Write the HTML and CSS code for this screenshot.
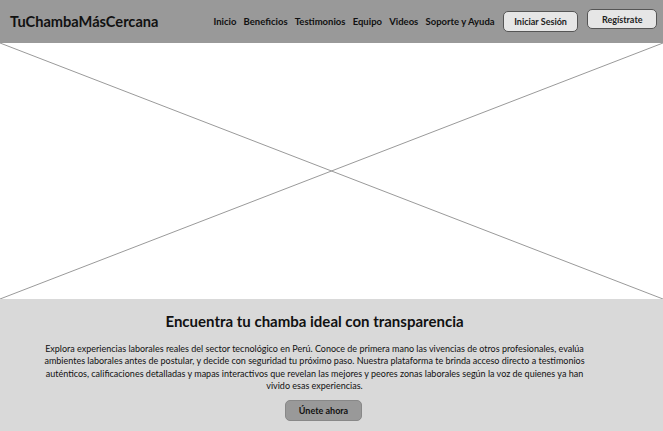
FILE: index.html
```html
<!DOCTYPE html>
<html lang="es">
<head>
<meta charset="utf-8">
<title>TuChambaMásCercana</title>
<link rel="stylesheet" href="styles.css">
</head>
<body>
<header class="topbar">
  <div class="logo">TuChambaMásCercana</div>
  <nav class="nav">
    <a href="#">Inicio</a>
    <a href="#">Beneficios</a>
    <a href="#">Testimonios</a>
    <a href="#">Equipo</a>
    <a href="#">Videos</a>
    <a href="#">Soporte y Ayuda</a>
  </nav>
  <div class="actions">
    <button class="btn btn-login">Iniciar Sesión</button>
    <button class="btn btn-register">Regístrate</button>
  </div>
</header>
<div class="placeholder">
  <svg class="xlines" viewBox="0 0 100 100" preserveAspectRatio="none">
    <line x1="0" y1="0" x2="100" y2="100"/>
    <line x1="100" y1="0" x2="0" y2="100"/>
  </svg>
</div>
<section class="hero">
  <h1 class="hero-title">Encuentra tu chamba ideal con transparencia</h1>
  <p class="hero-text">Explora experiencias laborales reales del sector tecnológico en Perú. Conoce de primera mano las vivencias de otros profesionales, evalúa ambientes laborales antes de postular, y decide con seguridad tu próximo paso. Nuestra plataforma te brinda acceso directo a testimonios auténticos, calificaciones detalladas y mapas interactivos que revelan las mejores y peores zonas laborales según la voz de quienes ya han vivido&nbsp;esas experiencias.</p>
  <button class="btn-cta">Únete ahora</button>
</section>
</body>
</html>
```
FILE: styles.css
```css
* { box-sizing: border-box; }
html, body { margin: 0; padding: 0; }
body {
  font-family: "Lato", "Open Sans", sans-serif;
  color: #111;
  width: 663px;
  height: 431px;
  overflow: hidden;
  background: #fff;
}
.topbar {
  height: 43px;
  background: #999999;
  display: flex;
  align-items: center;
  padding: 0 6px 0 10px;
}
.logo {
  font-weight: 700;
  font-size: 14.6px;
  color: #111;
}
.nav {
  margin-left: auto;
  display: flex;
  gap: 7.2px;
  margin-right: 8px;
}
.nav a {
  font-size: 9.5px;
  font-weight: 700;
  color: #111;
  text-decoration: none;
}
.actions {
  display: flex;
  gap: 9px;
  align-items: flex-start;
}
.btn {
  font-family: inherit;
  font-size: 9px;
  font-weight: 700;
  color: #222;
  background: #e6e6e6;
  border: 1px solid #555;
  border-radius: 5px;
  padding: 0 10.5px;
  height: 21px;
}
.btn-register { height: 20px; margin-top: -2px; padding: 0 13.5px; }
.placeholder {
  height: 256px;
  position: relative;
  background: #fff;
}
.xlines {
  position: absolute;
  inset: 0;
  width: 100%;
  height: 100%;
}
.xlines line {
  stroke: #9a9a9a;
  stroke-width: 1;
  vector-effect: non-scaling-stroke;
}
.hero {
  background: #d9d9d9;
  height: 132px;
  display: flex;
  flex-direction: column;
  align-items: center;
  padding: 13px 50px 0 16px;
}
.hero-title {
  margin: 0;
  font-size: 15px;
  font-weight: 700;
  color: #111;
}
.hero-text {
  max-width: 566px;
  margin: 13px 0 0;
  font-size: 9px;
  line-height: 12.3px;
  text-align: center;
  color: #111;
}
.btn-cta {
  margin-top: 8px;
  margin-left: 18px;
  font-family: inherit;
  font-size: 9px;
  font-weight: 700;
  background: #999999;
  color: #111;
  border: 1px solid #888;
  border-radius: 5px;
  height: 21px;
  padding: 0 13px;
}
```
